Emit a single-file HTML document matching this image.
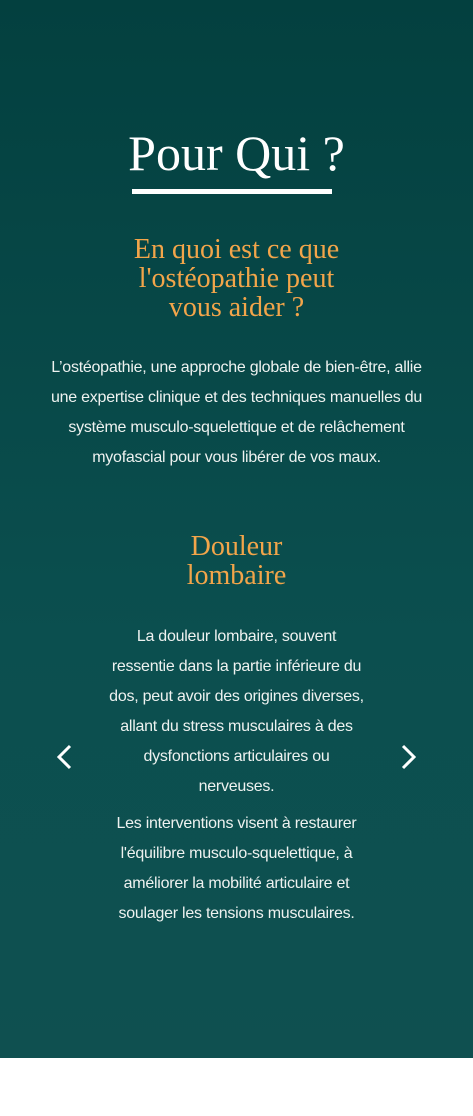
<!DOCTYPE html>
<html><head><meta charset="utf-8"><style>
*{margin:0;padding:0;box-sizing:border-box}
html,body{width:473px;height:1116px;background:#fff;overflow:hidden}
.sec{position:absolute;left:0;top:0;width:473px;height:1058px;background:linear-gradient(180deg,#03403f 0%,#0b4f4f 60%,#0f5050 100%)}
.l{position:absolute;left:0;width:473px;text-align:center;white-space:nowrap}
.t{font-family:"Liberation Serif",serif;color:#fff;font-size:50px;line-height:56px}
.o{font-family:"Liberation Serif",serif;color:#f2a54a;font-size:28px;line-height:32px}
.p{font-family:"Liberation Sans",sans-serif;color:#eef2f0;font-size:16px;line-height:20px;letter-spacing:-0.25px}
.bar{position:absolute;left:132px;top:189px;width:200px;height:5px;background:#fff}
</style></head><body>
<div class="sec">
<div class="l t" style="top:125px">Pour Qui ?</div>
<div class="bar"></div>
<div class="l o" style="top:234px">En quoi est ce que</div>
<div class="l o" style="top:263px">l'ostéopathie peut</div>
<div class="l o" style="top:292px">vous aider ?</div>
<div class="l p" style="top:358px">L’ostéopathie, une approche globale de bien-être, allie</div>
<div class="l p" style="top:388px">une expertise clinique et des techniques manuelles du</div>
<div class="l p" style="top:418px">système musculo-squelettique et de relâchement</div>
<div class="l p" style="top:448px">myofascial pour vous libérer de vos maux.</div>
<div class="l o" style="top:531px">Douleur</div>
<div class="l o" style="top:560px">lombaire</div>
<div class="l p" style="top:627px">La douleur lombaire, souvent</div>
<div class="l p" style="top:657px">ressentie dans la partie inférieure du</div>
<div class="l p" style="top:687px">dos, peut avoir des origines diverses,</div>
<div class="l p" style="top:717px">allant du stress musculaires à des</div>
<div class="l p" style="top:747px">dysfonctions articulaires ou</div>
<div class="l p" style="top:777px">nerveuses.</div>
<div class="l p" style="top:814px">Les interventions visent à restaurer</div>
<div class="l p" style="top:844px">l'équilibre musculo-squelettique, à</div>
<div class="l p" style="top:874px">améliorer la mobilité articulaire et</div>
<div class="l p" style="top:904px">soulager les tensions musculaires.</div>
<svg style="position:absolute;left:54px;top:744px" width="20" height="26" viewBox="0 0 20 26"><path d="M16 2 L5 13 L16 24" fill="none" stroke="#fff" stroke-width="3"/></svg>
<svg style="position:absolute;left:399px;top:744px" width="20" height="26" viewBox="0 0 20 26"><path d="M4 2 L15 13 L4 24" fill="none" stroke="#fff" stroke-width="3"/></svg>
</div>
</body></html>
